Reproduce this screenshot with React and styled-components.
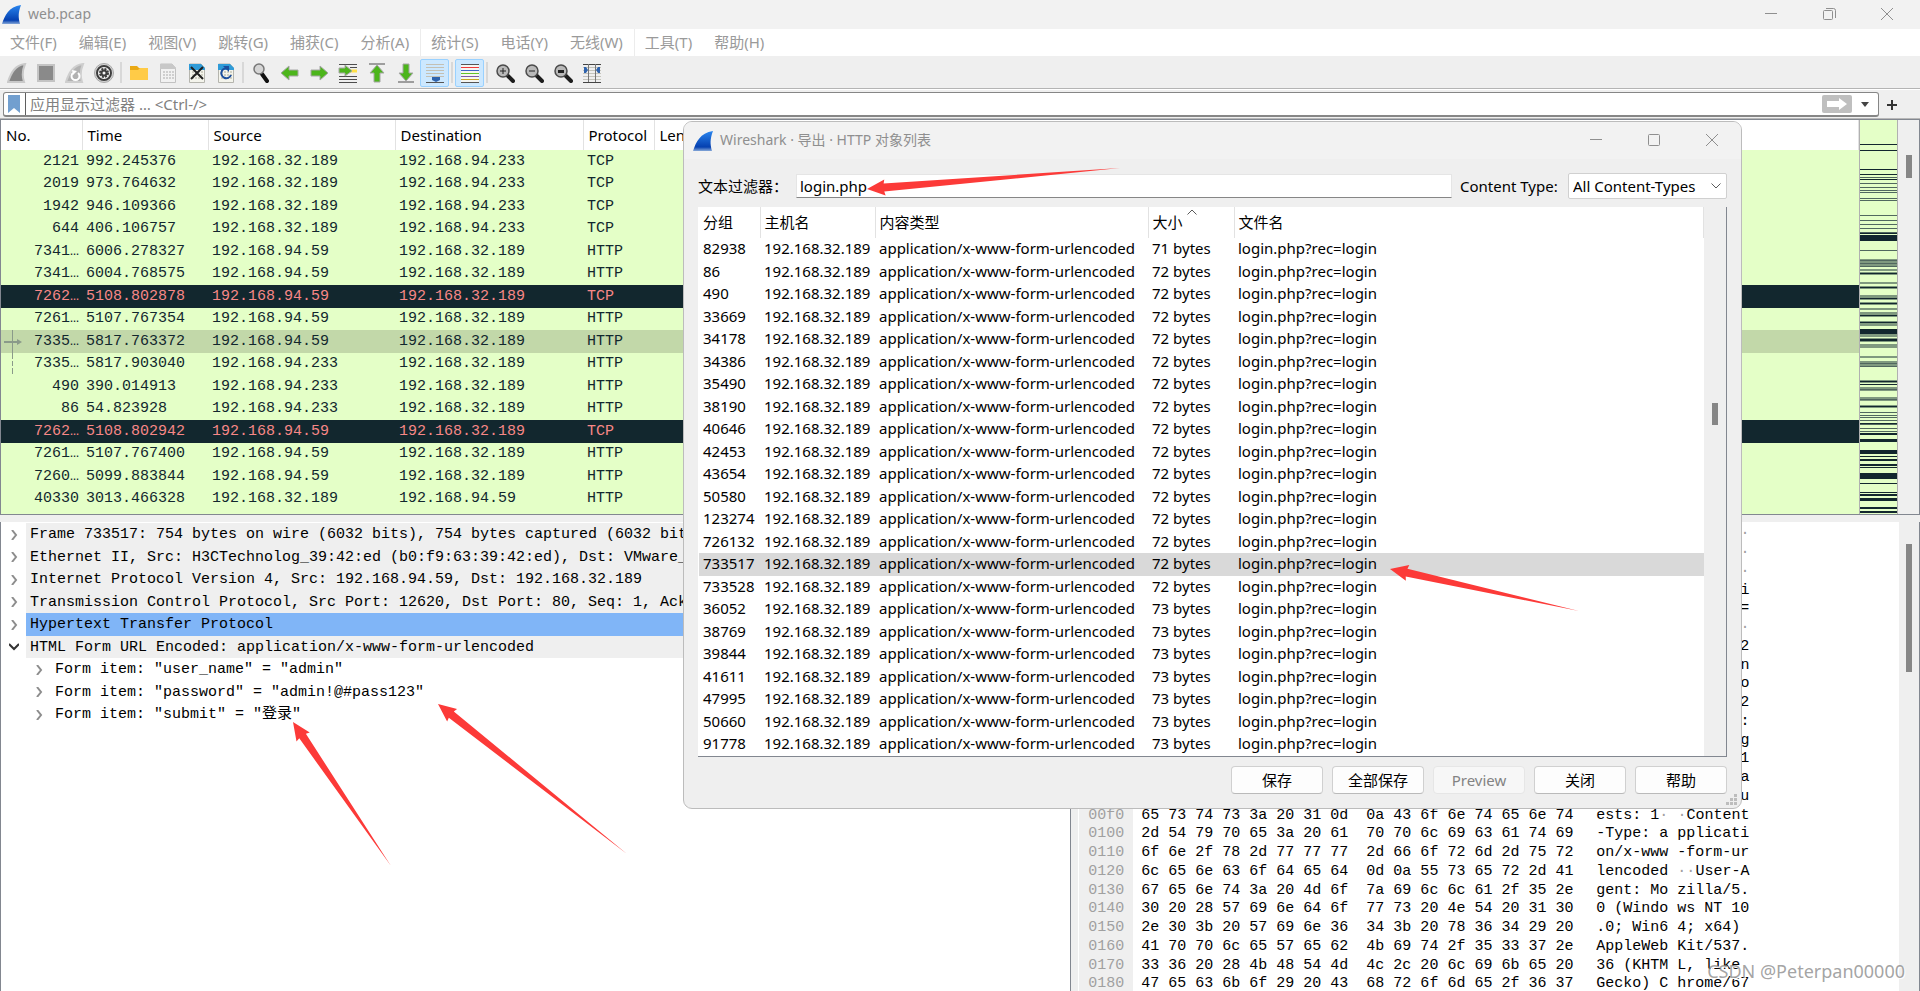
import React, { useState } from "react";
import styled, { createGlobalStyle } from "styled-components";

const ui = `"Noto Sans", "Noto Sans CJK SC", sans-serif`;
const mono = `"Liberation Mono", "Noto Sans CJK SC", monospace`;

const GlobalStyle = createGlobalStyle`
  * {
    box-sizing: border-box;
  }
  body {
    margin: 0;
    overflow: hidden;
    background: #efefef;
    font: 15px/20px ${ui};
    color: #000;
  }
  button, input, select {
    font: inherit;
    color: inherit;
    margin: 0;
    padding: 0;
    border: 0;
    background: none;
  }
  svg {
    display: block;
    flex: none;
  }
`;

const Window = styled.div`
  position: relative;
  display: flex;
  flex-direction: column;
  height: 100vh;
  overflow: hidden;
`;

const TitleBar = styled.header`
  display: flex;
  align-items: center;
  flex: none;
  height: ${({ $height }) => $height}px;
  padding: 0 ${({ $right }) => $right}px 0 ${({ $left }) => $left}px;
  background: #f2f2f2;
  color: #8f8f8f;
  font-size: 14px;
`;
const TitleText = styled.span`
  flex: 1;
  padding: 0 0 1px 7px;
`;
const WindowButton = styled.button`
  display: flex;
  align-items: center;
  justify-content: center;
  width: 58px;
  height: 100%;
  padding-bottom: 1px;
`;

const MenuBar = styled.nav`
  display: flex;
  flex: none;
  height: 27px;
  background: #fff;
`;
const MenuItem = styled.button`
  padding: 0 11px 2px 10px;
  color: #9a9a9a;
  border-right: 1px solid ${({ $divider }) => ($divider ? "#ececec" : "#fff")};
`;

const ToolBar = styled.div`
  display: flex;
  align-items: center;
  flex: none;
  height: 33px;
  padding: 2px 2px 1px;
  border-bottom: 1px solid #b4b4b4;
`;
const ToolButton = styled.button`
  display: flex;
  align-items: center;
  justify-content: center;
  width: 29px;
  height: 28px;
  border: 1px solid ${({ $active }) => ($active ? "#99d1ff" : "transparent")};
  border-radius: 2px;
  background: ${({ $active }) => ($active ? "#cce8ff" : "none")};
`;
const ToolDivider = styled.span`
  width: 2px;
  height: 21px;
  margin: 0 2px;
  background: #d8d8d8;
`;

const FilterBar = styled.div`
  display: flex;
  align-items: center;
  flex: none;
  height: 30px;
  padding: 2px 15px 1px 3px;
  border-top: 1px solid #fff;
  border-bottom: 1px solid #b8b8b8;
`;
const FilterField = styled.div`
  display: flex;
  align-items: center;
  flex: 1;
  height: 25px;
  border: 1px solid #868686;
  border-bottom-width: 2px;
  border-radius: 3px;
  background: #fff;
`;
const BookmarkButton = styled.button`
  width: 22px;
  height: 22px;
  padding-left: 4px;
  border-right: 1px solid #5f5f5f;
`;
const FilterInput = styled.input`
  flex: 1;
  min-width: 0;
  padding-left: 4px;
  outline: none;
  &::placeholder {
    color: #808080;
    opacity: 1;
  }
`;
const ApplyButton = styled.button`
  display: flex;
  align-items: center;
  justify-content: center;
  width: 30px;
  height: 18px;
  border-radius: 2px;
  background: #bfbfbf;
`;
const SmallButton = styled.button`
  display: flex;
  align-items: center;
  justify-content: center;
  width: 26px;
  height: 20px;
`;

const PacketPane = styled.section`
  display: flex;
  flex: none;
  border: 1px solid #828790;
  background: #e4ffc7;
`;
const PacketTable = styled.table`
  flex: 1;
  table-layout: fixed;
  border-collapse: collapse;
  height: 394px;
`;
const PacketHead = styled.th`
  height: 30px;
  padding: 0 0 0 5px;
  border-right: 1px solid #e2e2e2;
  background: #fff;
  font-weight: 400;
  text-align: left;
  overflow: hidden;
`;
const rowColors = {
  http: "background: #e4ffc7; color: #12272e;",
  bad: "background: #12272e; color: #f78787;",
  selected: "background: #c2d8a9; color: #12272e;",
};
const PacketRow = styled.tr`
  height: 22px;
  ${({ $kind }) => rowColors[$kind]}
  &:nth-child(odd) {
    height: 23px;
  }
`;
const PacketCell = styled.td`
  position: relative;
  padding: 0 3px 0 4px;
  font: 15px/20px ${mono};
  text-align: ${({ $right }) => ($right ? "right" : "left")};
  white-space: nowrap;
`;
const RelatedMark = styled.svg`
  position: absolute;
  left: 2px;
  top: 0;
`;
const MiniMap = styled.div`
  width: 39px;
  border: solid #b0b0b0;
  border-width: 0 1px;
`;
const ScrollTrack = styled.div`
  flex: none;
  width: ${({ $width }) => $width}px;
  padding-top: ${({ $offset }) => $offset}px;
  background: #efefef;
`;
const ScrollThumb = styled.div`
  width: 6px;
  height: ${({ $height }) => $height}px;
  margin: 0 auto;
  background: #868686;
`;

const BottomPanes = styled.div`
  display: flex;
  flex: 1;
  gap: 7px;
  min-height: 0;
  margin-top: 7px;
`;
const DetailsPane = styled.section`
  flex: 1071;
  min-width: 0;
  padding-top: 1px;
  border: solid #828790;
  border-width: 0 1px;
  background: #fff;
  overflow: hidden;
`;
const TreeRow = styled.div`
  display: flex;
  align-items: center;
  height: 22px;
  padding-left: ${({ $depth }) => $depth * 25}px;
  &:nth-child(odd) {
    height: 23px;
  }
`;
const TreeToggle = styled.button`
  display: flex;
  align-items: center;
  justify-content: center;
  width: 25px;
  height: 20px;
`;
const TreeLabel = styled.span`
  flex: 1;
  align-self: stretch;
  padding-left: 4px;
  background: ${({ $tone }) =>
    $tone === "blue" ? "#80b5f7" : $tone === "grey" ? "#efefef" : "none"};
  font: 15px/23px ${mono};
  white-space: pre;
  overflow: hidden;
`;

const BytesPane = styled.section`
  display: flex;
  flex: 842;
  min-width: 0;
  border: solid #828790;
  border-width: 0 1px 0 0;
  background: #fff;
  overflow: hidden;
`;
const BytesGrid = styled.div`
  flex: 1;
  border-left: 1px solid #fff;
  padding-top: 2px;
  font: 15px/19px ${mono};
  white-space: pre;
`;
const BytesRow = styled.div`
  display: flex;
  height: 19px;
  &:nth-child(4n) {
    height: 18px;
  }
`;
const Offset = styled.span`
  width: 54px;
  padding-left: 9px;
  background: #efefef;
  color: #a0a0a0;
`;
const Hex = styled.span`
  width: 463px;
  padding-left: 8px;
`;
const Dim = styled.span`
  color: #a0a0a0;
`;

const Dialog = styled.div`
  position: absolute;
  left: 683px;
  top: 121px;
  width: 1059px;
  border: 1px solid #bcbcbc;
  border-radius: 9px;
  background: #efefef;
  overflow: hidden;
`;
const DialogBody = styled.div`
  padding: 14px;
`;
const DialogFilters = styled.div`
  display: flex;
  align-items: center;
  height: 26px;
  margin-bottom: 8px;
`;
const DialogLabel = styled.label`
  width: ${({ $width }) => $width}px;
  white-space: nowrap;
`;
const TextField = styled.input`
  flex: 1;
  min-width: 0;
  height: 24px;
  margin-right: 8px;
  padding: 0 0 1px 3px;
  border: 1px solid #e5e5e5;
  border-bottom-color: #868686;
  background: #fff;
  outline: none;
`;
const SelectBox = styled.div`
  position: relative;
  width: 159px;
  > svg {
    position: absolute;
    right: 6px;
    top: 10px;
    pointer-events: none;
  }
`;
const TypeSelect = styled.select`
  width: 100%;
  height: 26px;
  padding: 0 0 1px 4px;
  appearance: none;
  border: 1px solid #d0d0d0;
  border-radius: 2px;
  background: #fff;
`;
const ObjectPane = styled.div`
  display: flex;
  border: solid #828790;
  border-width: 0 1px 1px 0;
  background: #fff;
`;
const ObjectTable = styled.table`
  flex: 1;
  table-layout: fixed;
  border-collapse: collapse;
  margin-left: 1px;
`;
const ObjectHead = styled.th`
  position: relative;
  height: 31px;
  padding: 0 0 2px 4px;
  border-right: 1px solid #e2e2e2;
  font-weight: 400;
  text-align: left;
`;
const SortMark = styled.svg`
  position: absolute;
  left: 38px;
  top: 2px;
`;
const ObjectRow = styled.tr`
  height: 22px;
  background: ${({ $selected }) => ($selected ? "#d9d9d9" : "none")};
  &:nth-child(odd) {
    height: 23px;
  }
`;
const ObjectCell = styled.td`
  padding: 0 0 0 4px;
  line-height: 20px;
  vertical-align: top;
  white-space: nowrap;
`;
const DialogButtons = styled.div`
  display: flex;
  justify-content: flex-end;
  gap: 9px;
  padding-top: 9px;
`;
const DialogButton = styled.button`
  width: 92px;
  height: 28px;
  border: 1px solid #d0d0d0;
  border-bottom-color: #bababa;
  border-radius: 4px;
  background: #fdfdfd;
  &:disabled {
    border-color: #e6e6e6;
    background: #f7f7f7;
    color: #838383;
  }
`;
const SizeGrip = styled.svg`
  position: absolute;
  right: 4px;
  bottom: 3px;
`;

const Annotations = styled.svg`
  position: absolute;
  left: 0;
  top: 0;
  pointer-events: none;
`;
const Watermark = styled.div`
  position: absolute;
  right: 15px;
  bottom: 6px;
  color: rgba(140, 140, 140, 0.8);
  font-size: 18px;
  line-height: 28px;
  text-shadow: 1px 1px 0 #fff;
`;

const menus = [
  "文件(F)",
  "编辑(E)",
  "视图(V)",
  "跳转(G)",
  "捕获(C)",
  "分析(A)",
  "统计(S)",
  "电话(Y)",
  "无线(W)",
  "工具(T)",
  "帮助(H)",
];

const packets = [
  ["2121", "992.245376", "192.168.32.189", "192.168.94.233", "TCP"],
  ["2019", "973.764632", "192.168.32.189", "192.168.94.233", "TCP"],
  ["1942", "946.109366", "192.168.32.189", "192.168.94.233", "TCP"],
  ["644", "406.106757", "192.168.32.189", "192.168.94.233", "TCP"],
  ["7341…", "6006.278327", "192.168.94.59", "192.168.32.189", "HTTP"],
  ["7341…", "6004.768575", "192.168.94.59", "192.168.32.189", "HTTP"],
  ["7262…", "5108.802878", "192.168.94.59", "192.168.32.189", "TCP", "bad"],
  ["7261…", "5107.767354", "192.168.94.59", "192.168.32.189", "HTTP"],
  ["7335…", "5817.763372", "192.168.94.59", "192.168.32.189", "HTTP", "selected"],
  ["7335…", "5817.903040", "192.168.94.233", "192.168.32.189", "HTTP"],
  ["490", "390.014913", "192.168.94.233", "192.168.32.189", "HTTP"],
  ["86", "54.823928", "192.168.94.233", "192.168.32.189", "HTTP"],
  ["7262…", "5108.802942", "192.168.94.59", "192.168.32.189", "TCP", "bad"],
  ["7261…", "5107.767400", "192.168.94.59", "192.168.32.189", "HTTP"],
  ["7260…", "5099.883844", "192.168.94.59", "192.168.32.189", "HTTP"],
  ["40330", "3013.466328", "192.168.32.189", "192.168.94.59", "HTTP"],
];

const details = [
  [0, "grey", false, "Frame 733517: 754 bytes on wire (6032 bits), 754 bytes captured (6032 bits)"],
  [0, "grey", false, "Ethernet II, Src: H3CTechnolog_39:42:ed (b0:f9:63:39:42:ed), Dst: VMware_d"],
  [0, "grey", false, "Internet Protocol Version 4, Src: 192.168.94.59, Dst: 192.168.32.189"],
  [0, "grey", false, "Transmission Control Protocol, Src Port: 12620, Dst Port: 80, Seq: 1, Ack: 1"],
  [0, "blue", false, "Hypertext Transfer Protocol"],
  [0, "grey", true, "HTML Form URL Encoded: application/x-www-form-urlencoded"],
  [1, "", false, 'Form item: "user_name" = "admin"'],
  [1, "", false, 'Form item: "password" = "admin!@#pass123"'],
  [1, "", false, 'Form item: "submit" = "登录"'],
];

const objects = [
  ["82938", 71],
  ["86", 72],
  ["490", 72],
  ["33669", 72],
  ["34178", 72],
  ["34386", 72],
  ["35490", 72],
  ["38190", 72],
  ["40646", 72],
  ["42453", 72],
  ["43654", 72],
  ["50580", 72],
  ["123274", 72],
  ["726132", 72],
  ["733517", 72],
  ["733528", 72],
  ["36052", 73],
  ["38769", 73],
  ["39844", 73],
  ["41611", 73],
  ["47995", 73],
  ["50660", 73],
  ["91778", 73],
];

// 54 bytes of ethernet/ip/tcp headers, then the http request
const payload =
  "\x00\x0c\x29\x1d\xb3\xb1\xb0\xf9\x63\x39\x42\xed\x08\x00\x45\x00" +
  "\x02\xe4\x5e\x07\x40\x00\x7f\x06\x1b\x0d\xc0\xa8\x5e\x3b\xc0\xa8" +
  "\x20\xbd\x31\x4c\x00\x50\x8a\x1f\x93\x02\x6b\xc4\x11\x7e\x50\x18" +
  "\x01\x00\x9a\x44\x00\x00" +
  "POST /admin/login.php?rec=login HTTP/1.1\r\n" +
  "Host: 192.168.32.189\r\n" +
  "Connection: keep-alive\r\n" +
  "Content-Length: 72\r\n" +
  "Cache-Control: max-age=0\r\n" +
  "Origin: http://192.168.32.189\r\n" +
  "Upgrade-Insecure-Requests: 1\r\n" +
  "Content-Type: application/x-www-form-urlencoded\r\n" +
  "User-Agent: Mozilla/5.0 (Windows NT 10.0; Win64; x64) AppleWebKit/537.36 (KHTML, like Gecko) Chrome/67";

// [top, height, tone] of the stripes in the scroll map
const stripes = [
  [24, 1, 3], [30, 1, 3], [49, 1, 3], [54, 1, 3], [57, 1, 2], [59, 1, 3],
  [63, 1, 2], [67, 1, 2], [70, 1, 2], [72, 1, 2], [78, 1, 2], [80, 1, 2],
  [95, 1, 2], [100, 1, 2], [104, 1, 2], [108, 1, 2], [112, 1, 2], [113, 1, 3],
  [115, 6, 3], [130, 1, 2], [139, 8, 1], [140, 1, 2], [143, 1, 2], [146, 1, 2],
  [149, 2, 1], [152, 3, 1], [153, 1, 3], [162, 2, 1], [166, 3, 1], [167, 1, 3],
  [175, 5, 1], [178, 1, 3], [182, 3, 1], [183, 1, 3], [188, 2, 1], [192, 5, 1],
  [195, 1, 3], [201, 5, 1], [202, 1, 3], [209, 5, 3], [214, 3, 1], [218, 4, 1],
  [219, 2, 3], [224, 4, 1], [236, 2, 1], [241, 6, 1], [243, 1, 2], [246, 1, 2],
  [260, 3, 1], [261, 1, 3], [264, 1, 3], [267, 4, 1], [269, 1, 2], [277, 4, 1],
  [279, 1, 2], [285, 3, 1], [286, 1, 3], [292, 1, 2], [295, 1, 2], [297, 1, 2],
  [300, 1, 2], [303, 1, 3], [304, 1, 2], [308, 1, 2], [311, 1, 2], [313, 2, 3],
  [319, 3, 3], [330, 4, 3], [336, 1, 3], [339, 2, 3], [344, 2, 3], [347, 1, 3],
  [353, 6, 3], [363, 1, 3], [372, 1, 3], [374, 2, 3], [378, 3, 3], [387, 2, 3],
  [391, 2, 3],
];
const stripeTones = ["", "#7f997f", "#51685f", "#12272e"];

const FinIcon = ({ size, id }) => (
  <svg width={size} height={size} viewBox="0 0 20 20">
    <defs>
      <linearGradient id={id} x1="0" y1="0" x2="0" y2="1">
        <stop offset="0" stopColor="#2a86ef" />
        <stop offset="0.8" stopColor="#0540b0" />
        <stop offset="1" stopColor="#86a8d8" />
      </linearGradient>
    </defs>
    <path d="M0 20C3 11 7 2 20 0C17 8 17 13 19 20Z" fill={`url(#${id})`} />
  </svg>
);

const MinimizeIcon = () => (
  <svg width="12" height="12" viewBox="0 0 12 12" stroke="#8f8f8f">
    <path d="M0 5.5H12" />
  </svg>
);
const RestoreIcon = () => (
  <svg width="13" height="13" viewBox="0 0 13 13" stroke="#8f8f8f" fill="none">
    <rect x="0.5" y="2.5" width="9" height="9" rx="1" />
    <path d="M3 0.5H10.5Q12.5 0.5 12.5 2.5V10" />
  </svg>
);
const MaximizeIcon = () => (
  <svg width="12" height="12" viewBox="0 0 12 12" stroke="#8f8f8f" fill="none">
    <rect x="0.5" y="0.5" width="11" height="11" rx="1" />
  </svg>
);
const CloseIcon = () => (
  <svg width="12" height="12" viewBox="0 0 12 12" stroke="#8f8f8f">
    <path d="M0 0L12 12M12 0L0 12" />
  </svg>
);

const arrowPath = "M1 10L9 3V7H18V13H9V17Z";

const Page = ({ head = "#2f9bd8", children }) => (
  <>
    <path d="M2.5 1H14L17.5 5V19.5H2.5Z" fill="#f4f4ec" stroke="#b5b5ae" />
    <path d="M2 1H14L18 5V7H2Z" fill={head} />
    {children}
  </>
);
const PageDots = ({ color }) => (
  <path d="M5 9H16M5 12H16M5 15H16" stroke={color} strokeWidth="2" strokeDasharray="2 1" />
);
const Lens = ({ sign }) => (
  <>
    <path d="M12 12L18 18" stroke="#1d1d1d" strokeWidth="4" strokeLinecap="round" />
    <circle cx="8" cy="8" r="6" fill="#b9b9b9" stroke="#4b4b4b" strokeWidth="1.5" />
    {sign}
  </>
);

const toolGroups = [
  [
    ["开始捕获", <path d="M1 19C4 10 8 2 18 1C15 8 15 13 17 19Z" fill="#848484" stroke="#c9c9c9" strokeWidth="2" />],
    ["停止捕获", <rect x="2" y="2" width="16" height="16" fill="#8a8a8a" stroke="#c4c4c4" strokeWidth="2" />],
    [
      "重新开始捕获",
      <>
        <path d="M1 19C4 10 8 2 18 1C15 8 15 13 17 19Z" fill="#b2b2b2" stroke="#cecece" strokeWidth="2" />
        <path d="M8 10A4 4 0 1 0 13 10" fill="none" stroke="#fff" strokeWidth="2" />
        <path d="M7 7L12 8L8 12Z" fill="#fff" />
      </>,
    ],
    [
      "捕获选项",
      <>
        <circle cx="10" cy="10" r="9.5" fill="#d4d4d4" stroke="#a8a8a8" />
        <circle cx="10" cy="10" r="7" fill="#f4f4f4" stroke="#3d3d3d" strokeWidth="2" />
        <circle cx="10" cy="10" r="4" fill="none" stroke="#3d3d3d" strokeWidth="2" strokeDasharray="2 1.14" />
        <circle cx="10" cy="10" r="2.5" fill="none" stroke="#3d3d3d" strokeWidth="2" />
      </>,
    ],
  ],
  [
    [
      "打开",
      <>
        <path d="M1 3H8L10 5H19V17H1Z" fill="#eaa914" />
        <path d="M1 7H9L11 5H19V17H1Z" fill="#ffcb47" />
      </>,
    ],
    [
      "保存",
      <>
        <path d="M2.5 1H14L17.5 5V19.5H2.5Z" fill="#f2f2f2" stroke="#c2c2c2" />
        <path d="M2 1H14L18 5V6H2Z" fill="#c8c8c8" />
        <PageDots color="#cfcfcf" />
      </>,
    ],
    [
      "关闭",
      <Page>
        <PageDots color="#d0d0c4" />
        <path d="M4 4L16 16M16 4L4 16" stroke="#202020" strokeWidth="2" />
      </Page>,
    ],
    [
      "重新载入",
      <Page>
        <PageDots color="#d0d0c4" />
        <path d="M13 6A5 5 0 1 0 15 12" fill="none" stroke="#1d4f9e" strokeWidth="2" />
        <path d="M7 3H13V9Z" fill="#1d4f9e" />
      </Page>,
    ],
  ],
  [
    [
      "查找分组",
      <>
        <path d="M11 11L16 18" stroke="#111" strokeWidth="4" strokeLinecap="round" />
        <circle cx="8" cy="6" r="5" fill="#d5d5d5" stroke="#777" strokeWidth="1.5" />
      </>,
    ],
    ["前一分组", <path d={arrowPath} fill="#4cb51b" stroke="#a6a6a6" />],
    ["后一分组", <path d={arrowPath} transform="rotate(180 10 10)" fill="#4cb51b" stroke="#a6a6a6" />],
    [
      "转到分组",
      <>
        <path d="M1 1.5H19M12 4.5H19M1 13.5H19M1 16.5H19M1 19.5H19" stroke="#4d4d4d" />
        <path d="M12 8H19" stroke="#ffe04a" strokeWidth="3" />
        <path d="M1 5H7V2L14 8L7 13V10H1Z" fill="#4cb51b" stroke="#a6a6a6" />
      </>,
    ],
    [
      "首个分组",
      <>
        <path d="M2 1H18" stroke="#9e9e9e" strokeWidth="2" />
        <path d={arrowPath} transform="rotate(90 10 10) translate(1 0)" fill="#4cb51b" stroke="#a6a6a6" />
      </>,
    ],
    [
      "最新分组",
      <>
        <path d="M2 19H18" stroke="#9e9e9e" strokeWidth="2" />
        <path d={arrowPath} transform="rotate(-90 10 10) translate(1 0)" fill="#4cb51b" stroke="#a6a6a6" />
      </>,
    ],
    [
      "自动滚动",
      <>
        <path d="M1 1.5H19M1 4.5H19M1 7.5H19M1 10.5H19M1 13.5H19" stroke="#c4c0b4" />
        <path d="M1 19.5H19" stroke="#555" />
        <path d="M7 14H15V17L11 19L7 17Z" fill="#2f63ad" />
      </>,
      true,
    ],
  ],
  [
    [
      "着色分组",
      <>
        <path d="M1 1H19V19H1Z" fill="#f6f6f2" />
        <path d="M1 1.5H19" stroke="#555" />
        <path d="M1 4.5H19" stroke="#ef3a3a" />
        <path d="M1 7.5H19" stroke="#3d66c9" />
        <path d="M1 10.5H19" stroke="#62c32a" />
        <path d="M1 13.5H19" stroke="#7d58a8" />
        <path d="M1 16.5H19" stroke="#c7a320" />
        <path d="M1 19.5H19" stroke="#555" />
      </>,
      true,
    ],
  ],
  [
    ["放大", <Lens sign={<path d="M5 8H11M8 5V11" stroke="#222" />} />],
    ["缩小", <Lens sign={<path d="M5 8H11" stroke="#222" />} />],
    ["正常大小", <Lens sign={<rect x="5" y="7" width="6" height="3" fill="#222" />} />],
    [
      "调整列宽",
      <>
        <path d="M1 1.5H19M1 19.5H19" stroke="#444" />
        <path d="M1 4.5H19M1 7.5H19M1 10.5H19M1 13.5H19M1 16.5H19" stroke="#c4c4bc" />
        <path d="M6.5 1V19M13.5 1V19" stroke="#777" />
        <path d="M2 4H4L6 7L4 10H2ZM18 4H16L14 7L16 10H18Z" fill="#2f63ad" />
      </>,
    ],
  ],
];

const RedArrow = ({ tip, tail }) => {
  const dx = tail[0] - tip[0];
  const dy = tail[1] - tip[1];
  const length = Math.hypot(dx, dy);
  const ux = dx / length;
  const uy = dy / length;
  const at = (along, side) =>
    `${tip[0] + ux * along - uy * side},${tip[1] + uy * along + ux * side}`;
  const points = [at(0, 0), at(18, 8), at(17, 4), at(length, 0), at(17, -4), at(18, -8)];
  return <polygon points={points.join(" ")} fill="#fc3a38" />;
};

const AsciiText = ({ text }) => {
  const parts = text.split(/([^\x20-\x7e]+)/);
  return parts.map((part, i) =>
    i % 2 ? <Dim key={i}>{"·".repeat(part.length)}</Dim> : part
  );
};

const hexOf = (text) =>
  [...text].map((c) => c.charCodeAt(0).toString(16).padStart(2, "0")).join(" ");

const byteRows = [];
for (let i = 0; i < payload.length; i += 16) {
  byteRows.push([i, payload.slice(i, i + 8), payload.slice(i + 8, i + 16)]);
}

const PacketList = () => (
  <PacketPane>
    <PacketTable>
      <colgroup>
        <col width="81" />
        <col width="126" />
        <col width="187" />
        <col width="188" />
        <col width="71" />
        <col />
      </colgroup>
      <thead>
        <tr>
          {["No.", "Time", "Source", "Destination", "Protocol", "Length"].map((name) => (
            <PacketHead key={name}>{name}</PacketHead>
          ))}
        </tr>
      </thead>
      <tbody>
        {packets.map(([no, time, source, destination, protocol, kind], i) => (
          <PacketRow key={i} $kind={kind || "http"}>
            <PacketCell $right>
              {kind === "selected" && (
                <RelatedMark width="20" height="46" stroke="#8a9a8a" fill="#8a9a8a">
                  <path d="M9.5 0V29M9.5 31V36M9.5 38V44" fill="none" />
                  <path d="M1 12H14" strokeWidth="2" />
                  <path d="M14 9V15L19 12Z" stroke="none" />
                </RelatedMark>
              )}
              {no}
            </PacketCell>
            <PacketCell>{time}</PacketCell>
            <PacketCell>{source}</PacketCell>
            <PacketCell>{destination}</PacketCell>
            <PacketCell>{protocol}</PacketCell>
            <PacketCell />
          </PacketRow>
        ))}
        <tr>
          <td colSpan={6} />
        </tr>
      </tbody>
    </PacketTable>
    <MiniMap>
      <svg width="37" height="394" shapeRendering="crispEdges">
        {stripes.map(([top, height, tone], i) => (
          <rect key={i} y={top} width="37" height={height} fill={stripeTones[tone]} />
        ))}
      </svg>
    </MiniMap>
    <ScrollTrack $width={21} $offset={35}>
      <ScrollThumb $height={23} />
    </ScrollTrack>
  </PacketPane>
);

const ExportDialog = () => {
  const [filter, setFilter] = useState("login.php");

  return (
    <Dialog role="dialog" aria-labelledby="export-title">
      <TitleBar $height={37} $left={9} $right={0}>
        <FinIcon size={20} id="fin-dialog" />
        <TitleText id="export-title">Wireshark · 导出 · HTTP 对象列表</TitleText>
        <WindowButton aria-label="最小化"><MinimizeIcon /></WindowButton>
        <WindowButton aria-label="最大化"><MaximizeIcon /></WindowButton>
        <WindowButton aria-label="关闭"><CloseIcon /></WindowButton>
      </TitleBar>
      <DialogBody>
        <DialogFilters>
          <DialogLabel $width={98} htmlFor="text-filter">文本过滤器：</DialogLabel>
          <TextField
            id="text-filter"
            value={filter}
            onChange={(e) => setFilter(e.target.value)}
          />
          <DialogLabel $width={108} htmlFor="content-type">Content Type:</DialogLabel>
          <SelectBox>
            <TypeSelect id="content-type">
              <option>All Content-Types</option>
            </TypeSelect>
            <svg width="10" height="6" viewBox="0 0 10 6" fill="none" stroke="#5a5a5a">
              <path d="M0.5 0.5L5 5L9.5 0.5" />
            </svg>
          </SelectBox>
        </DialogFilters>
        <ObjectPane>
          <ObjectTable>
            <colgroup>
              <col width="61" />
              <col width="115" />
              <col width="273" />
              <col width="86" />
              <col />
            </colgroup>
            <thead>
              <tr>
                <ObjectHead>分组</ObjectHead>
                <ObjectHead>主机名</ObjectHead>
                <ObjectHead>内容类型</ObjectHead>
                <ObjectHead>
                  大小
                  <SortMark width="10" height="6" viewBox="0 0 10 6" fill="none" stroke="#5a5a5a">
                    <path d="M0.5 5.5L5 1L9.5 5.5" />
                  </SortMark>
                </ObjectHead>
                <ObjectHead>文件名</ObjectHead>
              </tr>
            </thead>
            <tbody>
              {objects.map(([packet, size]) => (
                <ObjectRow key={packet} $selected={packet === "733517"}>
                  <ObjectCell>{packet}</ObjectCell>
                  <ObjectCell>192.168.32.189</ObjectCell>
                  <ObjectCell>application/x-www-form-urlencoded</ObjectCell>
                  <ObjectCell>{size} bytes</ObjectCell>
                  <ObjectCell>login.php?rec=login</ObjectCell>
                </ObjectRow>
              ))}
            </tbody>
          </ObjectTable>
          <ScrollTrack $width={22} $offset={196}>
            <ScrollThumb $height={22} />
          </ScrollTrack>
        </ObjectPane>
        <DialogButtons>
          <DialogButton>保存</DialogButton>
          <DialogButton>全部保存</DialogButton>
          <DialogButton disabled>Preview</DialogButton>
          <DialogButton>关闭</DialogButton>
          <DialogButton>帮助</DialogButton>
        </DialogButtons>
      </DialogBody>
      <SizeGrip width="11" height="11" fill="#bdbdbd">
        <path d="M8 0h3v3h-3zM8 4h3v3h-3zM4 4h3v3h-3zM8 8h3v3h-3zM4 8h3v3h-3zM0 8h3v3h-3z" />
      </SizeGrip>
    </Dialog>
  );
};

export default function App() {
  return (
    <Window>
      <GlobalStyle />
      <TitleBar $height={29} $left={2} $right={4}>
        <FinIcon size={19} id="fin-main" />
        <TitleText>web.pcap</TitleText>
        <WindowButton aria-label="最小化"><MinimizeIcon /></WindowButton>
        <WindowButton aria-label="还原"><RestoreIcon /></WindowButton>
        <WindowButton aria-label="关闭"><CloseIcon /></WindowButton>
      </TitleBar>
      <MenuBar>
        {menus.map((menu, i) => (
          <MenuItem key={menu} $divider={i === 5 || i === 8}>{menu}</MenuItem>
        ))}
      </MenuBar>
      <ToolBar>
        {toolGroups.map((group, g) => (
          <React.Fragment key={g}>
            {g > 0 && <ToolDivider />}
            {group.map(([label, icon, active]) => (
              <ToolButton key={label} aria-label={label} $active={active}>
                <svg width="20" height="20" viewBox="0 0 20 20">{icon}</svg>
              </ToolButton>
            ))}
          </React.Fragment>
        ))}
      </ToolBar>
      <FilterBar>
        <FilterField>
          <BookmarkButton aria-label="书签">
            <svg width="12" height="18" viewBox="0 0 12 18">
              <path d="M0 0H12V18L6 13L0 18Z" fill="#729fcf" />
            </svg>
          </BookmarkButton>
          <FilterInput aria-label="显示过滤器" placeholder="应用显示过滤器 … <Ctrl-/>" />
          <ApplyButton aria-label="应用">
            <svg width="20" height="12" viewBox="0 0 20 12">
              <path d="M0 3H12V0L20 6L12 12V9H0Z" fill="#fff" />
            </svg>
          </ApplyButton>
          <SmallButton aria-label="历史">
            <svg width="8" height="5" viewBox="0 0 8 5">
              <path d="M0 0H8L4 5Z" fill="#444" />
            </svg>
          </SmallButton>
        </FilterField>
        <SmallButton aria-label="添加">
          <svg width="10" height="10" viewBox="0 0 10 10">
            <path d="M0 5H10M5 0V10" stroke="#333" strokeWidth="2" />
          </svg>
        </SmallButton>
      </FilterBar>
      <PacketList />
      <BottomPanes>
        <DetailsPane>
          {details.map(([depth, tone, open, text]) => (
            <TreeRow key={text} $depth={depth}>
              <TreeToggle aria-label={open ? "折叠" : "展开"}>
                <svg width="10" height="10" viewBox="0 0 10 10" fill="none" strokeWidth="2">
                  {open ? (
                    <path d="M0 2L5 7L10 2" stroke="#333" />
                  ) : (
                    <path d="M3 0L7 5L3 10" stroke="#8d8d8d" />
                  )}
                </svg>
              </TreeToggle>
              <TreeLabel $tone={tone}>{text}</TreeLabel>
            </TreeRow>
          ))}
        </DetailsPane>
        <BytesPane>
          <BytesGrid>
            {byteRows.map(([offset, left, right]) => (
              <BytesRow key={offset}>
                <Offset>{offset.toString(16).padStart(4, "0")}</Offset>
                <Hex>{hexOf(left) + "  " + hexOf(right)}</Hex>
                <span>
                  <AsciiText text={left} /> <AsciiText text={right} />
                </span>
              </BytesRow>
            ))}
          </BytesGrid>
          <ScrollTrack $width={20} $offset={22}>
            <ScrollThumb $height={128} />
          </ScrollTrack>
        </BytesPane>
      </BottomPanes>
      <ExportDialog />
      <Annotations width="1920" height="991">
        <RedArrow tip={[867, 189]} tail={[1120, 168]} />
        <RedArrow tip={[1390, 569]} tail={[1579, 611]} />
        <RedArrow tip={[438, 704]} tail={[627, 854]} />
        <RedArrow tip={[293, 722]} tail={[391, 866]} />
      </Annotations>
      <Watermark>CSDN @Peterpan00000</Watermark>
    </Window>
  );
}
